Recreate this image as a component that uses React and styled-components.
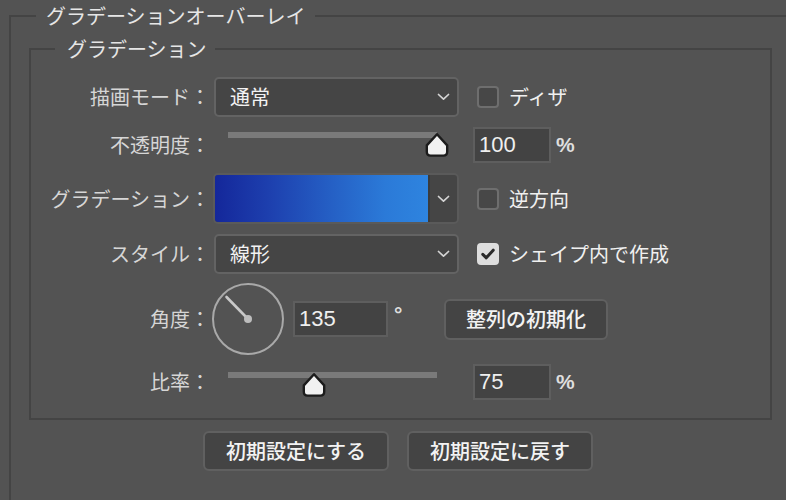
import React from 'react'
import styled, { createGlobalStyle } from 'styled-components'

const GlobalStyle = createGlobalStyle`
  html, body {
    margin: 0;
    padding: 0;
    background: #535353;
    overflow: hidden;
  }
  body {
    font-family: "Noto Sans CJK JP", sans-serif;
    font-size: 20px;
    line-height: 1.2;
    color: #d8d8d8;
  }
`

function Chevron() {
  return (
    <svg width="13" height="8" viewBox="0 0 13 8">
      <path d="M1.5 1.5 L6.5 6.2 L11.5 1.5" fill="none" stroke="#d4d4d4" strokeWidth="1.7" strokeLinecap="round" strokeLinejoin="round" />
    </svg>
  )
}

function Thumb() {
  return (
    <svg width="26" height="26" viewBox="0 0 26 26">
      <path d="M13 2.2 L23.2 13.4 V19.8 Q23.2 23.6 19.4 23.6 H6.6 Q2.8 23.6 2.8 19.8 V13.4 Z" fill="#f1f1f1" stroke="#1c1c1c" strokeWidth="2.4" strokeLinejoin="round" />
    </svg>
  )
}

function Dial() {
  return (
    <svg width="74" height="74" viewBox="0 0 74 74">
      <circle cx="37" cy="37" r="35" fill="none" stroke="#a9a9a9" strokeWidth="2" />
      <line x1="37" y1="37" x2="15.5" y2="15" stroke="#c9c9c9" strokeWidth="2.6" strokeLinecap="round" />
      <circle cx="37" cy="37" r="4" fill="#bdbdbd" />
    </svg>
  )
}

function Checkbox({ checked, label }) {
  return (
    <CheckItem>
      <Box checked={checked}>
        {checked && (
          <svg width="18" height="18" viewBox="0 0 18 18">
            <path d="M3.8 9.4 L7.3 12.8 L14.2 5.2" fill="none" stroke="#2b2b2b" strokeWidth="3" strokeLinecap="round" strokeLinejoin="round" />
          </svg>
        )}
      </Box>
      {label}
    </CheckItem>
  )
}

function Slider({ pos, trackTop }) {
  return (
    <SliderBox>
      <Track top={trackTop}>
        <ThumbWrap style={{ left: `calc(${pos}% - 13px)` }}>
          <Thumb />
        </ThumbWrap>
      </Track>
    </SliderBox>
  )
}

function App() {
  return (
    <>
      <GlobalStyle />
      <Outer>
        <OuterLegend>グラデーションオーバーレイ</OuterLegend>
        <Inner>
          <InnerLegend>グラデーション</InnerLegend>
          <Form>
            <Row h={40}>
              <Label>描画モード：</Label>
              <Select>
                通常
                <Chevron />
              </Select>
              <Checkbox label="ディザ" />
            </Row>
            <Row h={36}>
              <Label>不透明度：</Label>
              <Slider pos={100} trackTop={5} />
              <NumInput>100</NumInput>
              <Unit>%</Unit>
            </Row>
            <Row h={51}>
              <Label>グラデーション：</Label>
              <GradientPicker>
                <Swatch />
                <GradientArrow>
                  <Chevron />
                </GradientArrow>
              </GradientPicker>
              <Checkbox label="逆方向" />
            </Row>
            <Row h={40}>
              <Label>スタイル：</Label>
              <Select>
                線形
                <Chevron />
              </Select>
              <Checkbox checked label="シェイプ内で作成" />
            </Row>
            <Row h={70}>
              <Label>角度：</Label>
              <DialWrap>
                <Dial />
              </DialWrap>
              <NumInput w={95} ml={8}>135</NumInput>
              <Unit w={50} ml={6} up>°</Unit>
              <Button w={164} h={41}>整列の初期化</Button>
            </Row>
            <Row h={36}>
              <Label>比率：</Label>
              <Slider pos={41} trackTop={8} />
              <NumInput>75</NumInput>
              <Unit>%</Unit>
            </Row>
          </Form>
        </Inner>
        <ButtonRow>
          <Button w={186} h={40}>初期設定にする</Button>
          <Button w={186} h={40}>初期設定に戻す</Button>
        </ButtonRow>
      </Outer>
    </>
  )
}

export default App

const Outer = styled.fieldset`
  margin: 0 0 0 9px;
  padding: 0;
  min-width: 0;
  border: 2px solid #444444;
  border-right: none;
  border-bottom: none;
  height: 520px;
  box-sizing: border-box;
`

const OuterLegend = styled.legend`
  margin-left: 25px;
  padding: 0 10px;
  line-height: 32px;
  font-size: 20px;
  color: #e6e6e6;
`

const Inner = styled.fieldset`
  margin: 1px 14px 0 18px;
  padding: 12px 0 18px 0;
  min-width: 0;
  border: 2px solid #444444;
`

const InnerLegend = styled.legend`
  margin-left: 24px;
  padding: 0 8px 0 12px;
  line-height: 32px;
  font-size: 20px;
  color: #e6e6e6;
`

const Form = styled.div`
  display: flex;
  flex-direction: column;
  gap: 10px;
`

const Row = styled.div`
  display: flex;
  align-items: center;
  height: ${p => p.h}px;
`

const Label = styled.div`
  width: 179px;
  flex: none;
  margin-right: 4px;
  text-align: right;
  white-space: nowrap;
  color: #d6d6d6;
`

const Select = styled.div`
  width: 245px;
  height: 40px;
  box-sizing: border-box;
  display: flex;
  align-items: center;
  justify-content: space-between;
  padding: 0 7px 0 14px;
  background: #454545;
  border: 2px solid #636363;
  border-radius: 5px;
  color: #f2f2f2;
`

const CheckItem = styled.div`
  display: flex;
  align-items: center;
  gap: 10px;
  margin-left: 18px;
  color: #f0f0f0;
  white-space: nowrap;
`

const Box = styled.div`
  width: 22px;
  height: 22px;
  box-sizing: border-box;
  display: flex;
  align-items: center;
  justify-content: center;
  border-radius: 4px;
  border: 2px solid ${p => (p.checked ? '#dedede' : '#6e6e6e')};
  background: ${p => (p.checked ? '#dedede' : '#474747')};
`

const SliderBox = styled.div`
  width: 245px;
  height: 100%;
  flex: none;
`

const Track = styled.div`
  position: relative;
  margin: ${p => p.top}px 22px 0 14px;
  height: 6px;
  background: #7a7a7a;
`

const ThumbWrap = styled.div`
  position: absolute;
  top: 0;
  width: 26px;
  height: 26px;
  display: flex;
`

const NumInput = styled.div`
  width: ${p => p.w || 78}px;
  height: 36px;
  box-sizing: border-box;
  margin-left: ${p => (p.ml !== undefined ? p.ml : 14)}px;
  padding-left: 4px;
  display: flex;
  align-items: center;
  background: #434343;
  border: 2px solid #5e5e5e;
  font-family: "Liberation Sans", "Noto Sans CJK JP", sans-serif;
  font-size: 22px;
  color: #efefef;
`

const Unit = styled.div`
  width: ${p => p.w || 30}px;
  margin-left: ${p => (p.ml !== undefined ? p.ml : 5)}px;
  margin-top: ${p => (p.up ? -10 : 0)}px;
  font-family: "Liberation Sans", "Noto Sans CJK JP", sans-serif;
  font-size: 21px;
  font-weight: bold;
  color: #dedede;
`

const GradientPicker = styled.div`
  width: 246px;
  height: 51px;
  box-sizing: border-box;
  margin-left: -1px;
  display: flex;
  border: 2px solid #5a5a5a;
  border-radius: 5px;
  overflow: hidden;
  background: #454545;
`

const Swatch = styled.div`
  flex: 1;
  background: linear-gradient(90deg, #14279a 0%, #1d3fae 25%, #2560c5 55%, #2b7ad8 80%, #2e84df 100%);
`

const GradientArrow = styled.div`
  width: 27px;
  display: flex;
  align-items: center;
  justify-content: center;
  border-left: 2px solid #3b3b3b;
`

const DialWrap = styled.div`
  margin-left: -3px;
  display: flex;
`

const Button = styled.div`
  width: ${p => p.w}px;
  height: ${p => p.h}px;
  box-sizing: border-box;
  display: flex;
  align-items: center;
  justify-content: center;
  background: #444444;
  border: 2px solid #606060;
  border-radius: 6px;
  color: #f3f3f3;
  font-weight: 500;
  white-space: nowrap;
`

const ButtonRow = styled.div`
  display: flex;
  gap: 18px;
  margin: 11px 0 0 192px;
`
